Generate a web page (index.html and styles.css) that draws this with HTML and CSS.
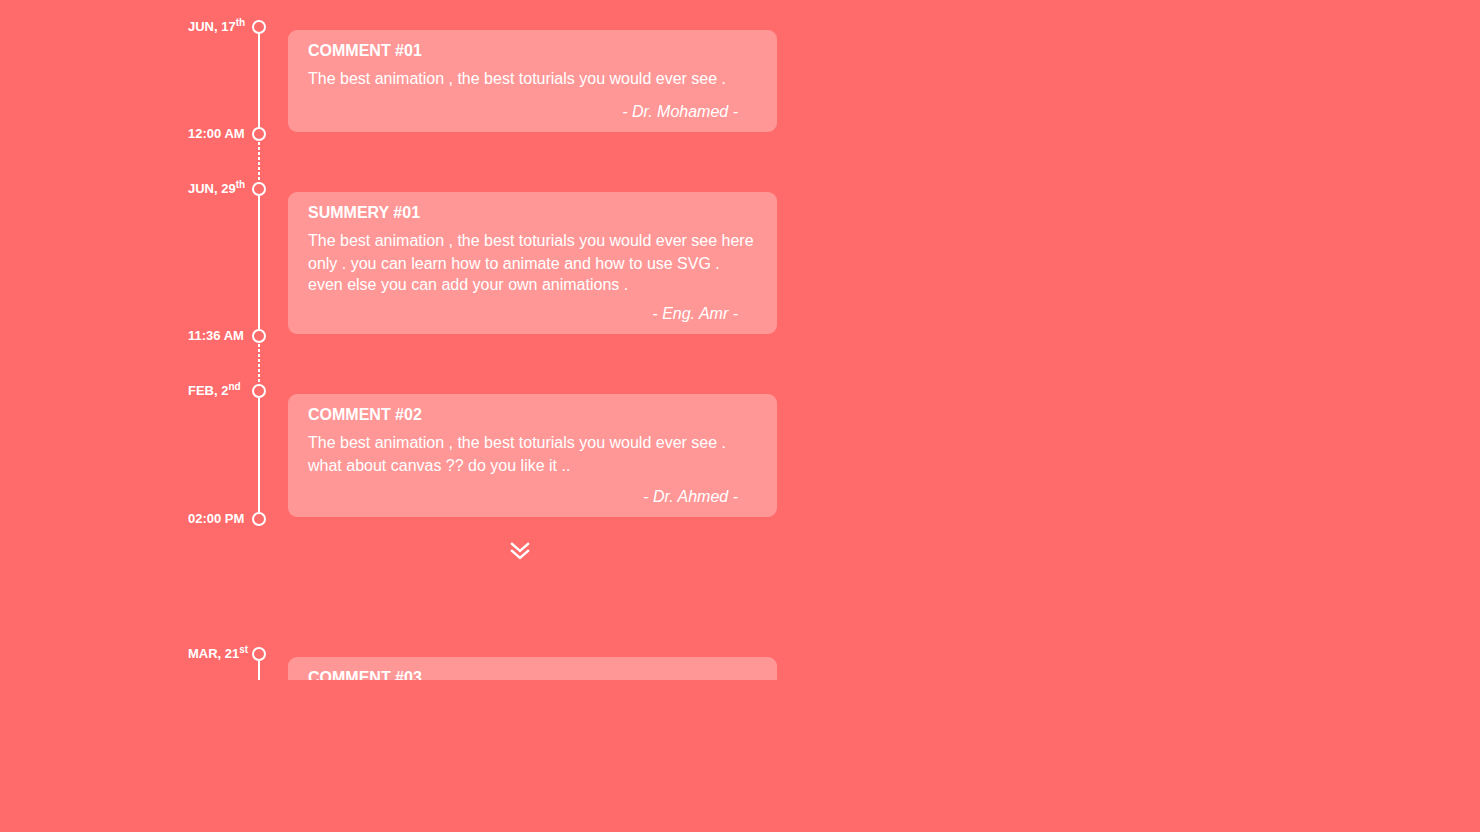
FILE: index.html
```html
<!DOCTYPE html>
<html>
<head>
<meta charset="utf-8">
<link rel="stylesheet" href="styles.css">
</head>
<body>
<div class="timeline">
  <div class="entry">
    <div class="rail">
      <div class="mark"><span class="label">JUN, 17<sup>th</sup></span><span class="dot"></span></div>
      <div class="line"></div>
      <div class="mark"><span class="label">12:00 AM</span><span class="dot"></span></div>
    </div>
    <div class="card">
      <h3 class="title">COMMENT #01</h3>
      <p class="body">The best animation , the best toturials you would ever see .</p>
      <p class="author wide">- Dr. Mohamed -</p>
    </div>
  </div>
  <div class="link"><div class="dots"></div></div>
  <div class="entry">
    <div class="rail">
      <div class="mark"><span class="label">JUN, 29<sup>th</sup></span><span class="dot"></span></div>
      <div class="line"></div>
      <div class="mark"><span class="label">11:36 AM</span><span class="dot"></span></div>
    </div>
    <div class="card">
      <h3 class="title">SUMMERY #01</h3>
      <p class="body">The best animation , the best toturials you would ever see here<br>only . you can learn how to animate and how to use SVG .</p>
      <p class="body tight">even else you can add your own animations .</p>
      <p class="author">- Eng. Amr -</p>
    </div>
  </div>
  <div class="link"><div class="dots"></div></div>
  <div class="entry">
    <div class="rail">
      <div class="mark"><span class="label">FEB, 2<sup>nd</sup></span><span class="dot"></span></div>
      <div class="line"></div>
      <div class="mark"><span class="label">02:00 PM</span><span class="dot"></span></div>
    </div>
    <div class="card">
      <h3 class="title">COMMENT #02</h3>
      <p class="body">The best animation , the best toturials you would ever see .<br>what about canvas ?? do you like it ..</p>
      <p class="author">- Dr. Ahmed -</p>
    </div>
  </div>
  <div class="more">
    <svg width="20" height="18" viewBox="0 0 20 18" fill="none" stroke="#fff" stroke-width="2.4" stroke-linecap="square">
      <polyline points="2,2 10,9 18,2"/>
      <polyline points="2,9 10,16 18,9"/>
    </svg>
  </div>
  <div class="entry">
    <div class="rail">
      <div class="mark"><span class="label">MAR, 21<sup>st</sup></span><span class="dot"></span></div>
      <div class="line"></div>
      <div class="mark"><span class="label">04:30 PM</span><span class="dot"></span></div>
    </div>
    <div class="card">
      <h3 class="title">COMMENT #03</h3>
      <p class="body">The best animation , the best toturials you would ever see .</p>
      <p class="author">- Dr. Mohamed -</p>
    </div>
  </div>
</div>
</body>
</html>
```
FILE: styles.css
```css
html, body {
  margin: 0;
  padding: 0;
  background: #ff6b6b;
  font-family: "Liberation Sans", Arial, sans-serif;
  color: #fff;
}

.timeline {
  height: 680px;
  overflow: hidden;
  padding-top: 30px;
  box-sizing: border-box;
}

.entry {
  display: flex;
  padding-left: 188px;
}

.rail {
  width: 78px;
  margin: -10px 22px -9px 0;
  display: flex;
  flex-direction: column;
}

.mark {
  height: 14px;
  display: flex;
  align-items: center;
  justify-content: space-between;
}

.label {
  font-size: 13px;
  font-weight: bold;
  line-height: 14px;
  white-space: nowrap;
}

.label sup {
  font-size: 10px;
  line-height: 0;
  vertical-align: 5px;
}

.dot {
  width: 14px;
  height: 14px;
  box-sizing: border-box;
  border: 2px solid #fff;
  border-radius: 50%;
  flex: none;
}

.line {
  flex: 1;
  width: 2px;
  align-self: flex-end;
  margin-right: 6px;
  background: #fff;
}

.card {
  width: 489px;
  box-sizing: border-box;
  padding: 11px 20px 10px 20px;
  background: #ff9797;
  border-radius: 9px;
}

.title {
  margin: 0;
  font-size: 16px;
  line-height: 20px;
  font-weight: bold;
}

.body {
  margin: 6px 0 0;
  font-size: 16px;
  line-height: 23px;
}

.body.tight {
  margin-top: 0;
  line-height: 19px;
}

.author {
  margin: 10px 19px 0 0;
  font-size: 16px;
  line-height: 20px;
  font-style: italic;
  text-align: right;
}

.author.wide {
  margin-top: 12px;
}

.link {
  height: 60px;
  box-sizing: border-box;
  padding: 10px 0 0 258px;
}

.dots {
  width: 2px;
  height: 40px;
  background: repeating-linear-gradient(to bottom, #fff 0 3px, transparent 3px 5px);
}

.more {
  height: 140px;
  box-sizing: border-box;
  padding: 25px 0 0 510px;
}

.more svg {
  display: block;
}
```
